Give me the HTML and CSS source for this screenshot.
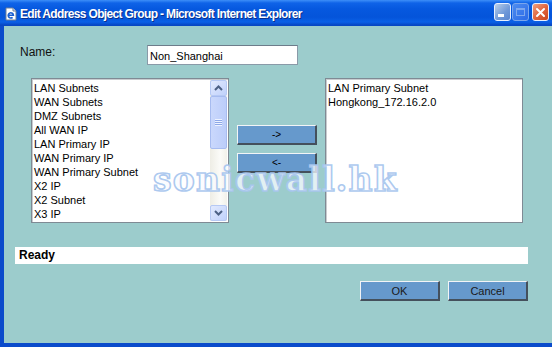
FILE: index.html
```html
<!DOCTYPE html>
<html lang="en">
<head>
  <meta charset="UTF-8" />
  <title>Edit Address Object Group</title>
  <link rel="stylesheet" href="styles.css">
</head>
<body>
  <div class="window">
    <!-- Titelleiste -->
    <div class="titlebar">
      <svg class="app-icon" width="14" height="14" viewBox="0 0 14 14">
        <path d="M2 1h7l3 3v9H2z" fill="#fff" stroke="#6a7f99" stroke-width="1"/>
        <path d="M9 1v3h3" fill="#dfe6ee" stroke="#6a7f99" stroke-width="1"/>
        <path d="M4.2 8.2h5.2a2.6 2.6 0 1 0-0.8 2.1" fill="none" stroke="#1a5fd0" stroke-width="1.6"/>
      </svg>
      <span class="title">Edit Address Object Group - Microsoft Internet Explorer</span>
      <div class="controls">
        <span class="ctl min"><span class="bar"></span></span>
        <span class="ctl max"><span class="box"></span></span>
        <span class="ctl close">
          <svg width="11" height="11" viewBox="0 0 11 11">
            <path d="M2 2l7 7M9 2l-7 7" stroke="#fff" stroke-width="2" stroke-linecap="round"/>
          </svg>
        </span>
      </div>
    </div>

    <div class="frame">
      <div class="name-row">
        <label for="name">Name:</label>
        <input id="name" class="field" type="text" value="Non_Shanghai">
      </div>

      <div class="lists">
        <div class="listbox">
          <ul class="items">
            <li>LAN Subnets</li>
            <li>WAN Subnets</li>
            <li>DMZ Subnets</li>
            <li>All WAN IP</li>
            <li>LAN Primary IP</li>
            <li>WAN Primary IP</li>
            <li>WAN Primary Subnet</li>
            <li>X2 IP</li>
            <li>X2 Subnet</li>
            <li>X3 IP</li>
          </ul>
          <div class="scrollbar">
            <span class="sb-btn">
              <svg width="9" height="6" viewBox="0 0 9 6"><path d="M1 5l3.5-3.5L8 5" fill="none" stroke="#4d6185" stroke-width="2"/></svg>
            </span>
            <span class="sb-thumb"><span class="grip"></span></span>
            <span class="sb-track"></span>
            <span class="sb-btn">
              <svg width="9" height="6" viewBox="0 0 9 6"><path d="M1 1l3.5 3.5L8 1" fill="none" stroke="#4d6185" stroke-width="2"/></svg>
            </span>
          </div>
        </div>

        <div class="movers">
          <button class="btn small">-&gt;</button>
          <button class="btn small">&lt;-</button>
        </div>

        <div class="listbox">
          <ul class="items">
            <li>LAN Primary Subnet</li>
            <li>Hongkong_172.16.2.0</li>
          </ul>
        </div>
      </div>

      <div class="status">Ready</div>

      <div class="actions">
        <button class="btn">OK</button>
        <button class="btn">Cancel</button>
      </div>

      <div class="watermark">sonicwall.hk</div>
    </div>
  </div>
</body>
</html>
```

FILE: styles.css
```css
body {
  margin: 0;
  font-family: "Liberation Sans", Arial, sans-serif;
  background: #9ccccc;
}
.window {
  width: 552px;
  height: 347px;
  display: flex;
  flex-direction: column;
  overflow: hidden;
}

/* Titelleiste */
.titlebar {
  height: 26px;
  box-sizing: border-box;
  display: flex;
  align-items: center;
  padding: 1px 3px 0 4px;
  background: linear-gradient(to bottom, #3d8ff8 0, #0f63e8 3px, #0658df 9px, #0454da 17px, #0a60e6 22px, #0747c4 25px, #0747c4 26px);
  color: #fff;
}
.app-icon {
  flex: none;
  margin-right: 2px;
}
.title {
  font-weight: bold;
  font-size: 12px;
  letter-spacing: -0.65px;
  text-shadow: 1px 1px 0 #0a2f8a;
  white-space: nowrap;
}
.controls {
  margin-left: auto;
  display: flex;
  gap: 1px;
  margin-top: -3px;
}
.ctl {
  width: 17px;
  height: 18px;
  box-sizing: border-box;
  border: 1px solid #e8f0ff;
  border-radius: 3px;
  background: linear-gradient(135deg, #6ea6f8, #2a6ae8 60%, #2f64d8);
  display: flex;
  align-items: center;
  justify-content: center;
  position: relative;
}
.ctl.min {
  background: linear-gradient(135deg, #b9cfe8, #6f98d8 60%, #5a86d0);
}
.ctl.min .bar {
  position: absolute;
  left: 3px;
  bottom: 3px;
  width: 6px;
  height: 3px;
  background: #fff;
}
.ctl.max {
  border-color: #7aa6ec;
  background: linear-gradient(135deg, #4d8cf0, #2c6ae6);
}
.ctl.max .box {
  width: 9px;
  height: 8px;
  box-sizing: border-box;
  border: 1px solid #7ea8ee;
  border-top-width: 2px;
}
.ctl.close {
  margin-left: 2px;
  background: linear-gradient(135deg, #f0a080, #e0623a 55%, #c8461e);
}

/* Inhalt */
.frame {
  flex: 1;
  position: relative;
  background: #9ccccc;
  border-left: 4px solid #0b4bcb;
  border-bottom: 4px solid #0b4bcb;
}
.name-row {
  display: flex;
  align-items: flex-start;
  margin-top: 19px;
  padding-left: 16px;
}
.name-row label {
  width: 127px;
  font-size: 12px;
  line-height: 14px;
  color: #111;
}
.field {
  width: 151px;
  height: 20px;
  box-sizing: border-box;
  margin: 0;
  padding: 2px 2px 0;
  border: 1px solid #8a9aa8;
  border-top-color: #6d7c8a;
  background: #fff;
  font-family: "Liberation Sans", Arial, sans-serif;
  font-size: 11px;
  color: #000;
}

.lists {
  display: flex;
  align-items: flex-start;
  gap: 8px;
  margin-top: 13px;
  padding-left: 27px;
}
.listbox {
  width: 198px;
  height: 145px;
  box-sizing: border-box;
  display: flex;
  background: #fff;
  border: 1px solid #7f8a94;
  box-shadow: inset 1px 1px 0 #c8cccf;
}
.items {
  flex: 1;
  list-style: none;
  margin: 0;
  padding: 2px 0 0 2px;
  font-size: 11px;
  line-height: 14px;
  color: #000;
  overflow: hidden;
}
.scrollbar {
  width: 17px;
  margin: 1px 1px 1px 0;
  display: flex;
  flex-direction: column;
  background: linear-gradient(to right, #eeede5, #fbfbf8 60%, #f2f1ea);
}
.sb-btn {
  height: 16px;
  box-sizing: border-box;
  border: 1px solid #b6c9f4;
  border-radius: 2px;
  background: linear-gradient(135deg, #e2eafe, #c0d1fb);
  display: flex;
  align-items: center;
  justify-content: center;
}
.sb-thumb {
  height: 53px;
  box-sizing: border-box;
  border: 1px solid #a7bcf0;
  border-radius: 2px;
  background: linear-gradient(to right, #cad8fc, #bccdfa);
  display: flex;
  align-items: center;
  justify-content: center;
}
.grip {
  width: 7px;
  height: 7px;
  background: repeating-linear-gradient(to bottom, #eef3ff 0 1px, #8da8e8 1px 2px);
}
.sb-track {
  flex: 1;
}

.movers {
  display: flex;
  flex-direction: column;
  gap: 8px;
  padding-top: 47px;
}
.btn {
  width: 80px;
  height: 20px;
  box-sizing: border-box;
  margin: 0;
  padding: 0;
  background: #6699cc;
  border-style: solid;
  border-width: 1px 2px 2px 1px;
  border-color: #f2f4f6 #44505c #44505c #f2f4f6;
  font-family: "Liberation Sans", Arial, sans-serif;
  font-size: 11px;
  color: #1a1a1a;
}
.btn.small {
  font-size: 10px;
  color: #000;
}

.status {
  width: 513px;
  height: 17px;
  box-sizing: border-box;
  margin: 24px 0 0 11px;
  padding-left: 4px;
  background: #fff;
  font-weight: bold;
  font-size: 12px;
  line-height: 17px;
  color: #000;
}
.actions {
  display: flex;
  justify-content: flex-end;
  gap: 8px;
  margin-top: 17px;
  padding-right: 24px;
}

/* Wasserzeichen */
.watermark {
  position: absolute;
  left: 149px;
  top: 134px;
  font-family: "DejaVu Serif", "Liberation Serif", serif;
  font-weight: bold;
  font-size: 33px;
  letter-spacing: 1.2px;
  color: rgba(250, 252, 255, 0.75);
  -webkit-text-stroke: 1.6px rgba(168, 198, 238, 0.95);
  pointer-events: none;
}
```
